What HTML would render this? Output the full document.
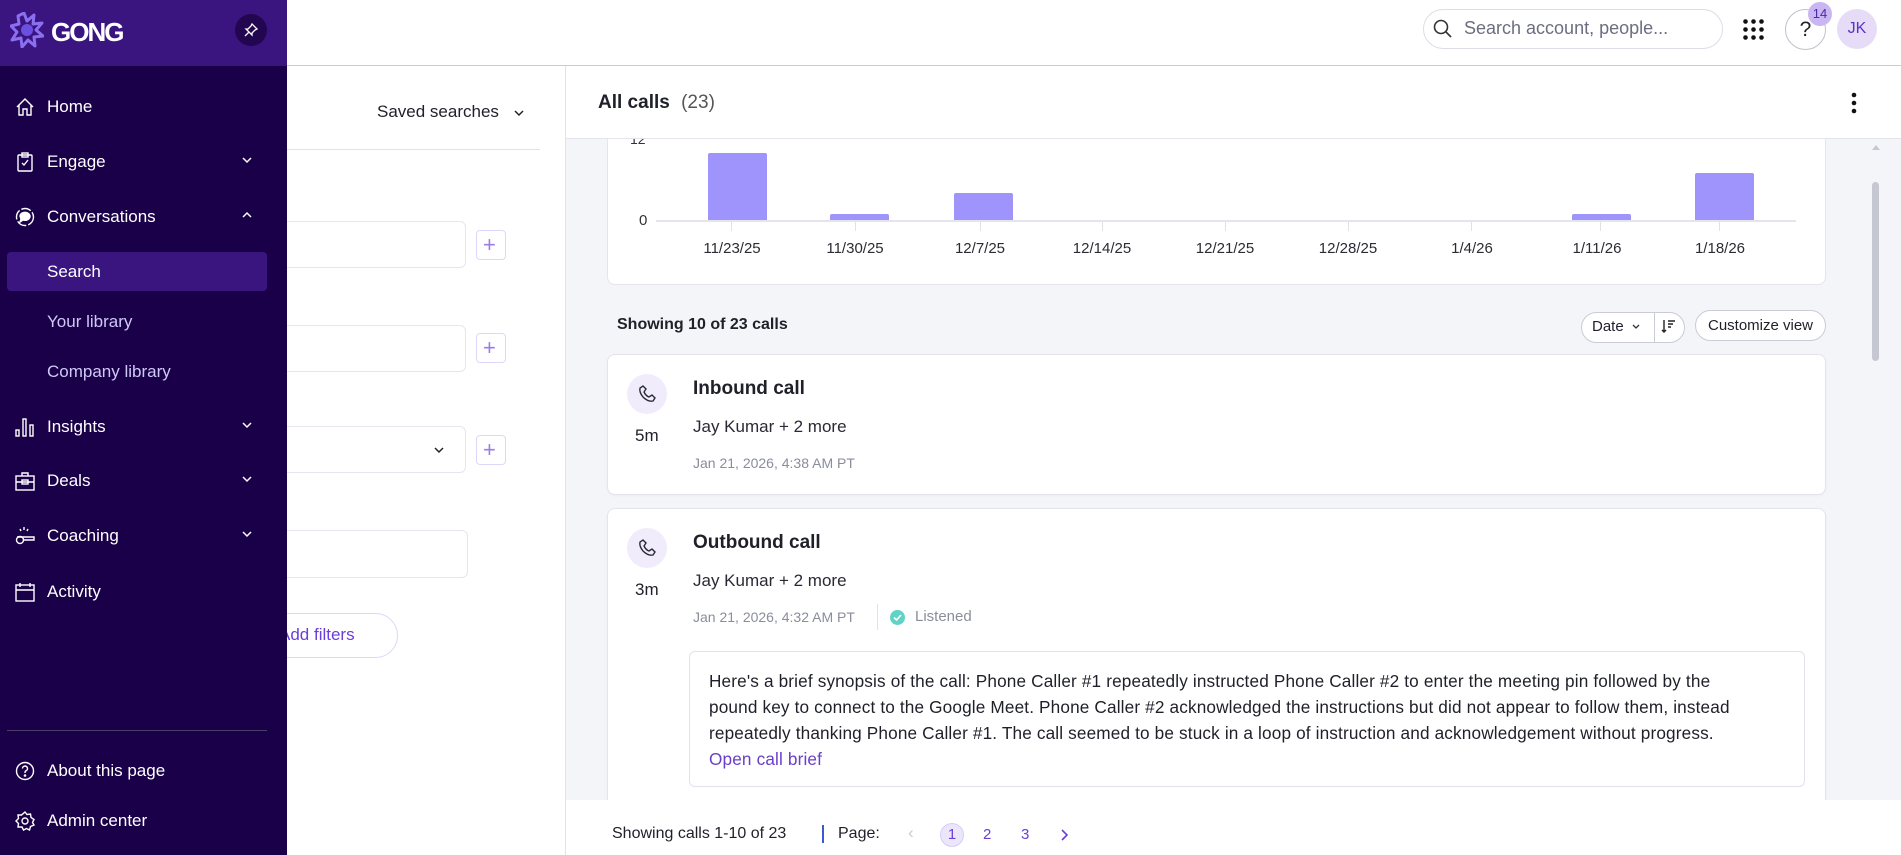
<!DOCTYPE html>
<html><head><meta charset="utf-8">
<style>
*{box-sizing:border-box;margin:0;padding:0}
body{width:1901px;height:855px;overflow:hidden;font-family:"Liberation Sans",sans-serif;background:#fff;position:relative;color:#1f2029}
.abs{position:absolute}
.sb{left:0;top:0;width:287px;height:855px;background:#1a0048;z-index:5}
.sbh{left:0;top:0;width:287px;height:66px;background:#3a1580;z-index:5}
.z{z-index:6}
.ni{position:absolute;left:0;width:287px;color:#fff;font-size:17px;line-height:20px;z-index:6}
.ni .t{position:absolute;left:47px;top:0;white-space:nowrap}
.ni svg.ic{position:absolute;left:15px;top:0}
.ni .ch{position:absolute;left:240px;top:1px}
.sub{color:#cfc8f7}
.box{border:1px solid #e6e6ee;border-radius:6px;background:#fff}
.plus{border:1px solid #e0d6fb;border-radius:4px;background:#fff}
.card{background:#fff;border-radius:8px;border:1px solid #e4e5ec;box-shadow:0 1px 2px rgba(0,0,0,.04)}
.bar{position:absolute;background:#9f94fb;border-radius:2px 2px 0 0;width:59px}
.tl{position:absolute;top:240px;font-size:15px;color:#2b2b33;width:100px;text-align:center;margin-left:-50px}
.tk{position:absolute;top:221px;width:1px;height:10px;background:#dfe0e8}
.phone{position:absolute;width:40px;height:40px;border-radius:50%;background:#f0ecfb}
</style></head><body>

<div class="abs" style="left:565px;top:66px;width:1px;height:789px;background:#e2e3ea"></div>
<div class="abs" style="left:377px;top:102px;font-size:17px;color:#1f2029">Saved searches</div>
<svg class="abs" style="left:512px;top:106px" width="14" height="14" viewBox="0 0 14 14" fill="none" stroke="#222" stroke-width="1.5"><path d="M3 5 L7 9 L11 5"/></svg>
<div class="abs" style="left:287px;top:149px;width:253px;height:1px;background:#e2e3ea"></div>
<div class="abs box" style="left:270px;top:221px;width:196px;height:47px"></div>
<div class="abs plus" style="left:476px;top:230px;width:30px;height:30px"></div>
<div class="abs" style="left:483px;top:236px;font-size:22px;color:#9c7ce8;line-height:18px">+</div>
<div class="abs box" style="left:270px;top:325px;width:196px;height:47px"></div>
<div class="abs plus" style="left:476px;top:333px;width:30px;height:30px"></div>
<div class="abs" style="left:483px;top:339px;font-size:22px;color:#9c7ce8;line-height:18px">+</div>
<div class="abs box" style="left:270px;top:426px;width:196px;height:47px"></div>
<svg class="abs" style="left:432px;top:443px" width="14" height="14" viewBox="0 0 14 14" fill="none" stroke="#222" stroke-width="1.5"><path d="M3 5 L7 9 L11 5"/></svg>
<div class="abs plus" style="left:476px;top:435px;width:30px;height:30px"></div>
<div class="abs" style="left:483px;top:441px;font-size:22px;color:#9c7ce8;line-height:18px">+</div>
<div class="abs box" style="left:270px;top:530px;width:198px;height:48px"></div>
<div class="abs" style="left:230px;top:613px;width:168px;height:45px;border:1px solid #e0d6fb;border-radius:23px"></div>
<div class="abs" style="left:279px;top:625px;font-size:17px;color:#6a3fd8">Add filters</div>

<div class="abs sb"></div>
<div class="abs sbh"></div>
<svg class="abs z" style="left:10px;top:12px" width="34" height="36" viewBox="0 0 34 36"><path d="M14 1 L17 9 L24 3 L23 12 L32 11 L26 18 L33 24 L24 25 L25 34 L18 28 L12 35 L11 26 L2 28 L7 20 L1 14 L9 12 L8 4 Z" fill="none" stroke="#8a6ff0" stroke-width="3" stroke-linejoin="round"/><circle cx="17" cy="18" r="6" fill="#6b4fe0"/></svg>
<div class="abs z" style="left:51px;top:17px;color:#fff;font-weight:bold;font-size:26px;letter-spacing:-2px">GONG</div>
<div class="abs z" style="left:235px;top:14px;width:32px;height:32px;border-radius:50%;background:#22064f"></div>
<svg class="abs z" style="left:243px;top:22px" width="16" height="16" viewBox="0 0 16 16" fill="none" stroke="#fff" stroke-width="1.3"><path d="M9 2 L14 7 L12 8 L9 11 L9 13 L3 7 L5 7 L8 4 Z M5.5 10.5 L2 14"/></svg>

<div class="ni" style="top:97px"><svg class="ic" width="20" height="20" viewBox="0 0 20 20" fill="none" stroke="#fff" stroke-width="1.4"><path d="M2 10 L10 2 L18 10 M4 8 V18 H8 V12 H12 V18 H16 V8"/></svg><span class="t">Home</span></div>
<div class="ni" style="top:152px"><svg class="ic" width="20" height="20" viewBox="0 0 20 20" fill="none" stroke="#fff" stroke-width="1.4"><rect x="3" y="3" width="14" height="16" rx="1"/><rect x="7" y="1" width="6" height="4"/><path d="M7 11 L9 13 L13 8"/></svg><span class="t">Engage</span><svg class="ch" width="14" height="14" viewBox="0 0 14 14" fill="none" stroke="#fff" stroke-width="1.5"><path d="M3 5 L7 9 L11 5"/></svg></div>
<div class="ni" style="top:207px"><svg class="ic" width="20" height="20" viewBox="0 0 20 20" fill="none" stroke="#fff" stroke-width="1.4"><circle cx="10" cy="10" r="8.5" stroke-dasharray="10 2"/><path d="M5 9 a5 4 0 1 1 3 4 L5 15 L6 12 Z" fill="#fff"/></svg><span class="t">Conversations</span><svg class="ch" width="14" height="14" viewBox="0 0 14 14" fill="none" stroke="#fff" stroke-width="1.5"><path d="M3 9 L7 5 L11 9"/></svg></div>
<div class="abs z" style="left:7px;top:252px;width:260px;height:39px;background:#3a1580;border-radius:4px"></div>
<div class="ni" style="top:262px"><span class="t">Search</span></div>
<div class="ni sub" style="top:312px"><span class="t">Your library</span></div>
<div class="ni sub" style="top:362px"><span class="t">Company library</span></div>
<div class="ni" style="top:417px"><svg class="ic" width="20" height="20" viewBox="0 0 20 20" fill="none" stroke="#fff" stroke-width="1.4"><rect x="1" y="13" width="3" height="6"/><rect x="8" y="2" width="3" height="17"/><rect x="15" y="8" width="3" height="11"/></svg><span class="t">Insights</span><svg class="ch" width="14" height="14" viewBox="0 0 14 14" fill="none" stroke="#fff" stroke-width="1.5"><path d="M3 5 L7 9 L11 5"/></svg></div>
<div class="ni" style="top:471px"><svg class="ic" width="20" height="20" viewBox="0 0 20 20" fill="none" stroke="#fff" stroke-width="1.4"><rect x="1" y="5" width="18" height="14"/><path d="M7 5 V2 H13 V5 M1 11 H19"/><rect x="7" y="9" width="6" height="4"/></svg><span class="t">Deals</span><svg class="ch" width="14" height="14" viewBox="0 0 14 14" fill="none" stroke="#fff" stroke-width="1.5"><path d="M3 5 L7 9 L11 5"/></svg></div>
<div class="ni" style="top:526px"><svg class="ic" width="20" height="20" viewBox="0 0 20 20" fill="none" stroke="#fff" stroke-width="1.4"><circle cx="5" cy="14" r="3.5"/><path d="M2 11 H19 V14 H9 M9 1 V4 M5 3 L6 5 M13 3 L12 5"/></svg><span class="t">Coaching</span><svg class="ch" width="14" height="14" viewBox="0 0 14 14" fill="none" stroke="#fff" stroke-width="1.5"><path d="M3 5 L7 9 L11 5"/></svg></div>
<div class="ni" style="top:582px"><svg class="ic" width="20" height="20" viewBox="0 0 20 20" fill="none" stroke="#fff" stroke-width="1.4"><rect x="1" y="3" width="18" height="16"/><path d="M1 8 H19 M5 1 V5 M15 1 V5"/></svg><span class="t">Activity</span></div>
<div class="abs z" style="left:7px;top:730px;width:260px;height:1px;background:#4a3f6a"></div>
<div class="ni" style="top:761px"><svg class="ic" width="20" height="20" viewBox="0 0 20 20" fill="none" stroke="#fff" stroke-width="1.4"><circle cx="10" cy="10" r="8.5"/><path d="M7.5 7.5 a2.5 2.5 0 1 1 3.5 2.3 c-1 .5 -1 1 -1 2.2"/><circle cx="10" cy="14.5" r=".6" fill="#fff"/></svg><span class="t">About this page</span></div>
<div class="ni" style="top:811px"><svg class="ic" width="20" height="20" viewBox="0 0 20 20" fill="none" stroke="#fff" stroke-width="1.4"><circle cx="10" cy="10" r="3"/><path d="M10 1 L12 3.5 L15.5 3 L16 6.5 L19 8.5 L17.5 11.5 L19 14 L15.5 15.5 L14.5 19 L11.5 17.5 L8.5 19 L7 16 L3 16 L3.5 12.5 L1 10 L3.5 7.5 L3 4 L6.5 4 Z"/></svg><span class="t">Admin center</span></div>

<div class="abs" style="left:287px;top:65px;width:1614px;height:1px;background:#c8cbdc"></div>
<div class="abs" style="left:1423px;top:9px;width:300px;height:40px;border:1px solid #dcdde6;border-radius:20px"></div>
<svg class="abs" style="left:1433px;top:19px" width="20" height="20" viewBox="0 0 20 20" fill="none" stroke="#333" stroke-width="1.6"><circle cx="8" cy="8" r="6.5"/><path d="M13 13 L18 18"/></svg>
<div class="abs" style="left:1464px;top:18px;font-size:18px;color:#6b6e80">Search account, people...</div>
<svg class="abs" style="left:1743px;top:19px" width="21" height="21" viewBox="0 0 21 21" fill="#111"><circle cx="2.5" cy="2.5" r="2.3"/><circle cx="10.5" cy="2.5" r="2.3"/><circle cx="18.5" cy="2.5" r="2.3"/><circle cx="2.5" cy="10.5" r="2.3"/><circle cx="10.5" cy="10.5" r="2.3"/><circle cx="18.5" cy="10.5" r="2.3"/><circle cx="2.5" cy="18.5" r="2.3"/><circle cx="10.5" cy="18.5" r="2.3"/><circle cx="18.5" cy="18.5" r="2.3"/></svg>
<div class="abs" style="left:1785px;top:9px;width:41px;height:41px;border:1px solid #bfc1cc;border-radius:50%;text-align:center;line-height:39px;font-size:21px;color:#222">?</div>
<div class="abs" style="left:1808px;top:2px;width:24px;height:24px;border-radius:50%;background:#c9b6f2;text-align:center;line-height:24px;font-size:13px;color:#4a2aa6">14</div>
<div class="abs" style="left:1837px;top:9px;width:40px;height:40px;border-radius:50%;background:#e6dcf8;text-align:center;line-height:40px;font-size:16px;color:#5b33c9">JK</div>

<div class="abs" style="left:566px;top:139px;width:1335px;height:661px;background:#f4f5f8"></div>
<div class="abs" style="left:566px;top:138px;width:1335px;height:1px;background:#e4e5ec"></div>
<div class="abs" style="left:598px;top:92px;font-size:19px;font-weight:bold;color:#1f2029">All calls <span style="font-weight:normal;color:#555;margin-left:6px">(23)</span></div>
<svg class="abs" style="left:1849px;top:92px" width="10" height="22" viewBox="0 0 10 22" fill="#111"><circle cx="5" cy="3" r="2.3"/><circle cx="5" cy="11" r="2.3"/><circle cx="5" cy="19" r="2.3"/></svg>
<svg class="abs" style="left:1870px;top:142px" width="12" height="10" viewBox="0 0 12 10"><path d="M2 8 L6 3 L10 8 Z" fill="#c5c8d2"/></svg>
<div class="abs" style="left:1872px;top:182px;width:7px;height:179px;border-radius:4px;background:#c5c8d2"></div>

<div class="abs" style="left:607px;top:139px;width:1219px;height:146px;background:#fff;border:1px solid #e4e5ec;border-top:none;border-radius:0 0 8px 8px"></div>
<div class="abs" style="left:630px;top:139px;font-size:14px;color:#333;height:6px;overflow:hidden;line-height:0px">12</div>
<div class="abs" style="left:639px;top:212px;font-size:15px;color:#333">0</div>
<div class="abs" style="left:656px;top:220px;width:1140px;height:2px;background:#e3e4ec"></div>
<div class="bar" style="left:708px;top:153px;height:67px"></div>
<div class="bar" style="left:830px;top:214px;height:6px"></div>
<div class="bar" style="left:954px;top:193px;height:27px"></div>
<div class="bar" style="left:1572px;top:214px;height:6px"></div>
<div class="bar" style="left:1695px;top:173px;height:47px"></div>
<div class="tk" style="left:731px"></div><div class="tk" style="left:855px"></div><div class="tk" style="left:980px"></div><div class="tk" style="left:1102px"></div><div class="tk" style="left:1225px"></div><div class="tk" style="left:1348px"></div><div class="tk" style="left:1471px"></div><div class="tk" style="left:1600px"></div><div class="tk" style="left:1719px"></div>
<div class="tl" style="left:732px">11/23/25</div><div class="tl" style="left:855px">11/30/25</div><div class="tl" style="left:980px">12/7/25</div><div class="tl" style="left:1102px">12/14/25</div><div class="tl" style="left:1225px">12/21/25</div><div class="tl" style="left:1348px">12/28/25</div><div class="tl" style="left:1472px">1/4/26</div><div class="tl" style="left:1597px">1/11/26</div><div class="tl" style="left:1720px">1/18/26</div>

<div class="abs" style="left:617px;top:316px;font-size:16px;font-weight:bold;color:#1f2029">Showing 10 of 23 calls</div>
<div class="abs" style="left:1581px;top:312px;width:104px;height:31px;border:1px solid #c9cbd6;border-radius:16px;background:#fff"></div>
<div class="abs" style="left:1654px;top:312px;width:1px;height:31px;background:#c9cbd6"></div>
<div class="abs" style="left:1592px;top:318px;font-size:15px">Date</div>
<svg class="abs" style="left:1630px;top:321px" width="12" height="12" viewBox="0 0 12 12" fill="none" stroke="#333" stroke-width="1.3"><path d="M3 4 L6 7 L9 4"/></svg>
<svg class="abs" style="left:1661px;top:318px" width="16" height="16" viewBox="0 0 16 16" fill="none" stroke="#222" stroke-width="1.4"><path d="M3 2 V14 M1 12 L3 14 L5 12 M7 3 H14 M7 6 H12 M7 9 H10"/></svg>
<div class="abs" style="left:1695px;top:310px;width:131px;height:31px;border:1px solid #c9cbd6;border-radius:16px;background:#fff;text-align:center;line-height:29px;font-size:15px">Customize view</div>

<div class="abs card" style="left:607px;top:354px;width:1219px;height:141px"></div>
<div class="phone" style="left:627px;top:374px"></div>
<svg class="abs" style="left:637px;top:384px" width="20" height="20" viewBox="0 0 20 20" fill="none" stroke="#2a2a35" stroke-width="1.4"><path d="M6 2 L9 5 L7 8 Q9 12 12 13 L15 11 L18 14 L16 17 Q11 18 6 13 Q2 8 3 4 Z"/></svg>
<div class="abs" style="left:635px;top:426px;font-size:17px">5m</div>
<div class="abs" style="left:693px;top:378px;font-size:19px;font-weight:bold">Inbound call</div>
<div class="abs" style="left:693px;top:417px;font-size:17px;color:#2a2a35">Jay Kumar + 2 more</div>
<div class="abs" style="left:693px;top:455px;font-size:14px;color:#8a8d9c">Jan 21, 2026, 4:38 AM PT</div>

<div class="abs card" style="left:607px;top:508px;width:1219px;height:310px"></div>
<div class="phone" style="left:627px;top:528px"></div>
<svg class="abs" style="left:637px;top:538px" width="20" height="20" viewBox="0 0 20 20" fill="none" stroke="#2a2a35" stroke-width="1.4"><path d="M6 2 L9 5 L7 8 Q9 12 12 13 L15 11 L18 14 L16 17 Q11 18 6 13 Q2 8 3 4 Z"/></svg>
<div class="abs" style="left:635px;top:580px;font-size:17px">3m</div>
<div class="abs" style="left:693px;top:532px;font-size:19px;font-weight:bold">Outbound call</div>
<div class="abs" style="left:693px;top:571px;font-size:17px;color:#2a2a35">Jay Kumar + 2 more</div>
<div class="abs" style="left:693px;top:609px;font-size:14px;color:#8a8d9c">Jan 21, 2026, 4:32 AM PT</div>
<div class="abs" style="left:877px;top:604px;width:1px;height:26px;background:#e2e3ea"></div>
<div class="abs" style="left:890px;top:610px;width:15px;height:15px;border-radius:50%;background:#5fd3c6"></div>
<svg class="abs" style="left:890px;top:610px" width="15" height="15" viewBox="0 0 15 15" fill="none" stroke="#fff" stroke-width="1.6"><path d="M4 7.5 L6.5 10 L11 5"/></svg>
<div class="abs" style="left:915px;top:608px;font-size:15px;color:#8a8d9c">Listened</div>
<div class="abs" style="left:689px;top:651px;width:1116px;height:136px;border:1px solid #e2e3ea;border-radius:6px;background:#fff"></div>
<div class="abs" style="left:709px;top:668px;white-space:nowrap;font-size:17.2px;line-height:26px;color:#1f2029;letter-spacing:0.15px">Here's a brief synopsis of the call: Phone Caller #1 repeatedly instructed Phone Caller #2 to enter the meeting pin followed by the<br>pound key to connect to the Google Meet. Phone Caller #2 acknowledged the instructions but did not appear to follow them, instead<br>repeatedly thanking Phone Caller #1. The call seemed to be stuck in a loop of instruction and acknowledgement without progress.<br><span style="color:#6a3fc8">Open call brief</span></div>

<div class="abs" style="left:566px;top:800px;width:1335px;height:55px;background:#fff"></div>
<div class="abs" style="left:612px;top:825px;font-size:16px;color:#1f2029">Showing calls 1-10 of 23</div>
<div class="abs" style="left:822px;top:825px;width:2px;height:18px;background:#3a5bd0"></div>
<div class="abs" style="left:838px;top:825px;font-size:16px">Page:</div>
<div class="abs" style="left:908px;top:823px;font-size:17px;color:#c8cad4">‹</div>
<div class="abs" style="left:940px;top:823px;width:24px;height:24px;border-radius:50%;background:#ece6fb;border:1px solid #d8ccf6;text-align:center;line-height:22px;font-size:15px;color:#6a3fd8">1</div>
<div class="abs" style="left:983px;top:826px;font-size:15px;color:#6a3fd8">2</div>
<div class="abs" style="left:1021px;top:826px;font-size:15px;color:#6a3fd8">3</div>
<svg class="abs" style="left:1058px;top:828px" width="12" height="14" viewBox="0 0 12 14" fill="none" stroke="#6a3fd8" stroke-width="1.6"><path d="M4 2 L9 7 L4 12"/></svg>
</body></html>
